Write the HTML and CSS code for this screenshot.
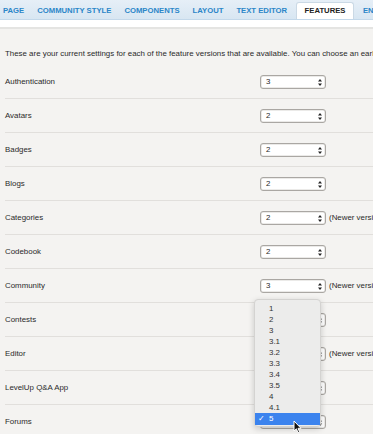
FILE: index.html
```html
<!DOCTYPE html>
<html lang="en">
<head>
    <meta charset="UTF-8">
    <meta name="viewport" content="width=device-width, initial-scale=1.0">
    <title>Features</title>
    <link rel="stylesheet" href="styles.css">
</head>
<body>
    <div class="tabs">
        <span class="tab first">PAGE</span>
        <span class="tab">COMMUNITY STYLE</span>
        <span class="tab">COMPONENTS</span>
        <span class="tab">LAYOUT</span>
        <span class="tab">TEXT EDITOR</span>
        <span class="tab active">FEATURES</span>
        <span class="tab">ENDORSEMENTS</span>
    </div>
    <div class="strip"></div>

    <div class="content">
        <p class="intro">These are your current settings for each of the feature versions that are available. You can choose an earlier version of a feature if you need to.</p>

        <div class="row">
            <span class="label">Authentication</span>
            <div class="pick"><div class="select">3<svg class="arrows" width="4" height="7" viewBox="0 0 4 7"><path d="M2 0 L4 2.6 L0 2.6 Z M2 7 L4 4.4 L0 4.4 Z"/></svg></div></div>
        </div>
        <div class="row">
            <span class="label">Avatars</span>
            <div class="pick"><div class="select">2<svg class="arrows" width="4" height="7" viewBox="0 0 4 7"><path d="M2 0 L4 2.6 L0 2.6 Z M2 7 L4 4.4 L0 4.4 Z"/></svg></div></div>
        </div>
        <div class="row">
            <span class="label">Badges</span>
            <div class="pick"><div class="select">2<svg class="arrows" width="4" height="7" viewBox="0 0 4 7"><path d="M2 0 L4 2.6 L0 2.6 Z M2 7 L4 4.4 L0 4.4 Z"/></svg></div></div>
        </div>
        <div class="row">
            <span class="label">Blogs</span>
            <div class="pick"><div class="select">2<svg class="arrows" width="4" height="7" viewBox="0 0 4 7"><path d="M2 0 L4 2.6 L0 2.6 Z M2 7 L4 4.4 L0 4.4 Z"/></svg></div></div>
        </div>
        <div class="row">
            <span class="label">Categories</span>
            <div class="pick"><div class="select">2<svg class="arrows" width="4" height="7" viewBox="0 0 4 7"><path d="M2 0 L4 2.6 L0 2.6 Z M2 7 L4 4.4 L0 4.4 Z"/></svg></div></div>
            <span class="note">(Newer version available)</span>
        </div>
        <div class="row">
            <span class="label">Codebook</span>
            <div class="pick"><div class="select">2<svg class="arrows" width="4" height="7" viewBox="0 0 4 7"><path d="M2 0 L4 2.6 L0 2.6 Z M2 7 L4 4.4 L0 4.4 Z"/></svg></div></div>
        </div>
        <div class="row">
            <span class="label">Community</span>
            <div class="pick"><div class="select">3<svg class="arrows" width="4" height="7" viewBox="0 0 4 7"><path d="M2 0 L4 2.6 L0 2.6 Z M2 7 L4 4.4 L0 4.4 Z"/></svg></div></div>
            <span class="note">(Newer version available)</span>
        </div>
        <div class="row">
            <span class="label">Contests</span>
            <div class="pick"><div class="select">2<svg class="arrows" width="4" height="7" viewBox="0 0 4 7"><path d="M2 0 L4 2.6 L0 2.6 Z M2 7 L4 4.4 L0 4.4 Z"/></svg></div></div>
        </div>
        <div class="row">
            <span class="label">Editor</span>
            <div class="pick"><div class="select">2<svg class="arrows" width="4" height="7" viewBox="0 0 4 7"><path d="M2 0 L4 2.6 L0 2.6 Z M2 7 L4 4.4 L0 4.4 Z"/></svg></div></div>
            <span class="note">(Newer version available)</span>
        </div>
        <div class="row">
            <span class="label">LevelUp Q&amp;A App</span>
            <div class="pick"><div class="select">1<svg class="arrows" width="4" height="7" viewBox="0 0 4 7"><path d="M2 0 L4 2.6 L0 2.6 Z M2 7 L4 4.4 L0 4.4 Z"/></svg></div></div>
        </div>
        <div class="row last">
            <span class="label">Forums</span>
            <div class="pick">
                <div class="select">5<svg class="arrows" width="4" height="7" viewBox="0 0 4 7"><path d="M2 0 L4 2.6 L0 2.6 Z M2 7 L4 4.4 L0 4.4 Z"/></svg></div>
                <ul class="menu">
                    <li>1</li>
                    <li>2</li>
                    <li>3</li>
                    <li>3.1</li>
                    <li>3.2</li>
                    <li>3.3</li>
                    <li>3.4</li>
                    <li>3.5</li>
                    <li>4</li>
                    <li>4.1</li>
                    <li class="picked"><span class="check">&#10003;</span>5</li>
                </ul>
                <svg class="cursor" width="9" height="14" viewBox="0 0 9 14">
                    <path d="M1 1 L1 11 L3.4 8.8 L5 12.6 L6.6 11.9 L5 8.3 L8 8.3 Z" fill="#111" stroke="#fff" stroke-width="1"/>
                </svg>
            </div>
        </div>
    </div>
</body>
</html>
```

FILE: styles.css
```css
body {
    margin: 0;
    font-family: 'Liberation Sans', Arial, sans-serif;
    font-size: 7.9px;
    color: #2a2a2a;
    background-color: #f4f3f1;
    overflow: hidden;
}
.tabs {
    display: flex;
    align-items: flex-end;
    height: 19px;
    white-space: nowrap;
    overflow: hidden;
    background: linear-gradient(#e6eff7, #d8e6f2);
    border-bottom: 1px solid #c3d8ea;
}
.tab {
    padding: 0 6.5px;
    height: 16px;
    line-height: 16px;
    font-size: 7.7px;
    font-weight: bold;
    color: #2b86c8;
    box-sizing: border-box;
}
.tab.first {
    margin-left: -3.5px;
}
.tab.active {
    margin-left: 2px;
    padding: 0 8px;
    height: 18px;
    line-height: 16px;
    color: #222;
    background-color: #fff;
    border: 1px solid #cbd9e5;
    border-bottom: none;
    border-radius: 3px 3px 0 0;
    margin-bottom: -1px;
    margin-right: 2px;
}
.strip {
    height: 7px;
    background-color: #fff;
    border-bottom: 2px solid #e4e4e2;
}
.content {
    padding: 0 0 0 5px;
}
.intro {
    margin: 0;
    padding-top: 20px;
    height: 16px;
    line-height: 9px;
    white-space: nowrap;
}
.row {
    display: flex;
    align-items: center;
    height: 33px;
    border-bottom: 1px solid #e1dfdc;
    white-space: nowrap;
}
.row.last {
    border-bottom: none;
}
.label {
    width: 255px;
    flex-shrink: 0;
}
.pick {
    position: relative;
    flex-shrink: 0;
}
.select {
    position: relative;
    width: 66px;
    height: 14px;
    box-sizing: border-box;
    padding-left: 5px;
    line-height: 12px;
    background-color: #fff;
    border: 1px solid #aaa7a3;
    border-radius: 3px;
    box-shadow: inset 0 0 0 0.5px #d8d5d1;
}
.arrows {
    position: absolute;
    right: 3px;
    top: 3px;
    fill: #222;
}
.note {
    margin-left: 3px;
}
.menu {
    position: absolute;
    left: -6px;
    bottom: 2px;
    width: 67px;
    margin: 0;
    padding: 3px 0 1px;
    list-style-type: none;
    background-color: #ececeb;
    border: 1px solid #d4d3d1;
    border-radius: 4px;
    box-shadow: 0 2px 6px rgba(0, 0, 0, 0.18);
    box-sizing: border-box;
}
.menu li {
    height: 11px;
    line-height: 11px;
    padding-left: 14px;
    color: #333;
}
.menu li.picked {
    position: relative;
    height: 12px;
    line-height: 12px;
    color: #fff;
    background-color: #3b83ee;
}
.check {
    position: absolute;
    left: 3px;
    font-size: 8px;
}
.cursor {
    position: absolute;
    left: 33px;
    top: 5px;
}
```
